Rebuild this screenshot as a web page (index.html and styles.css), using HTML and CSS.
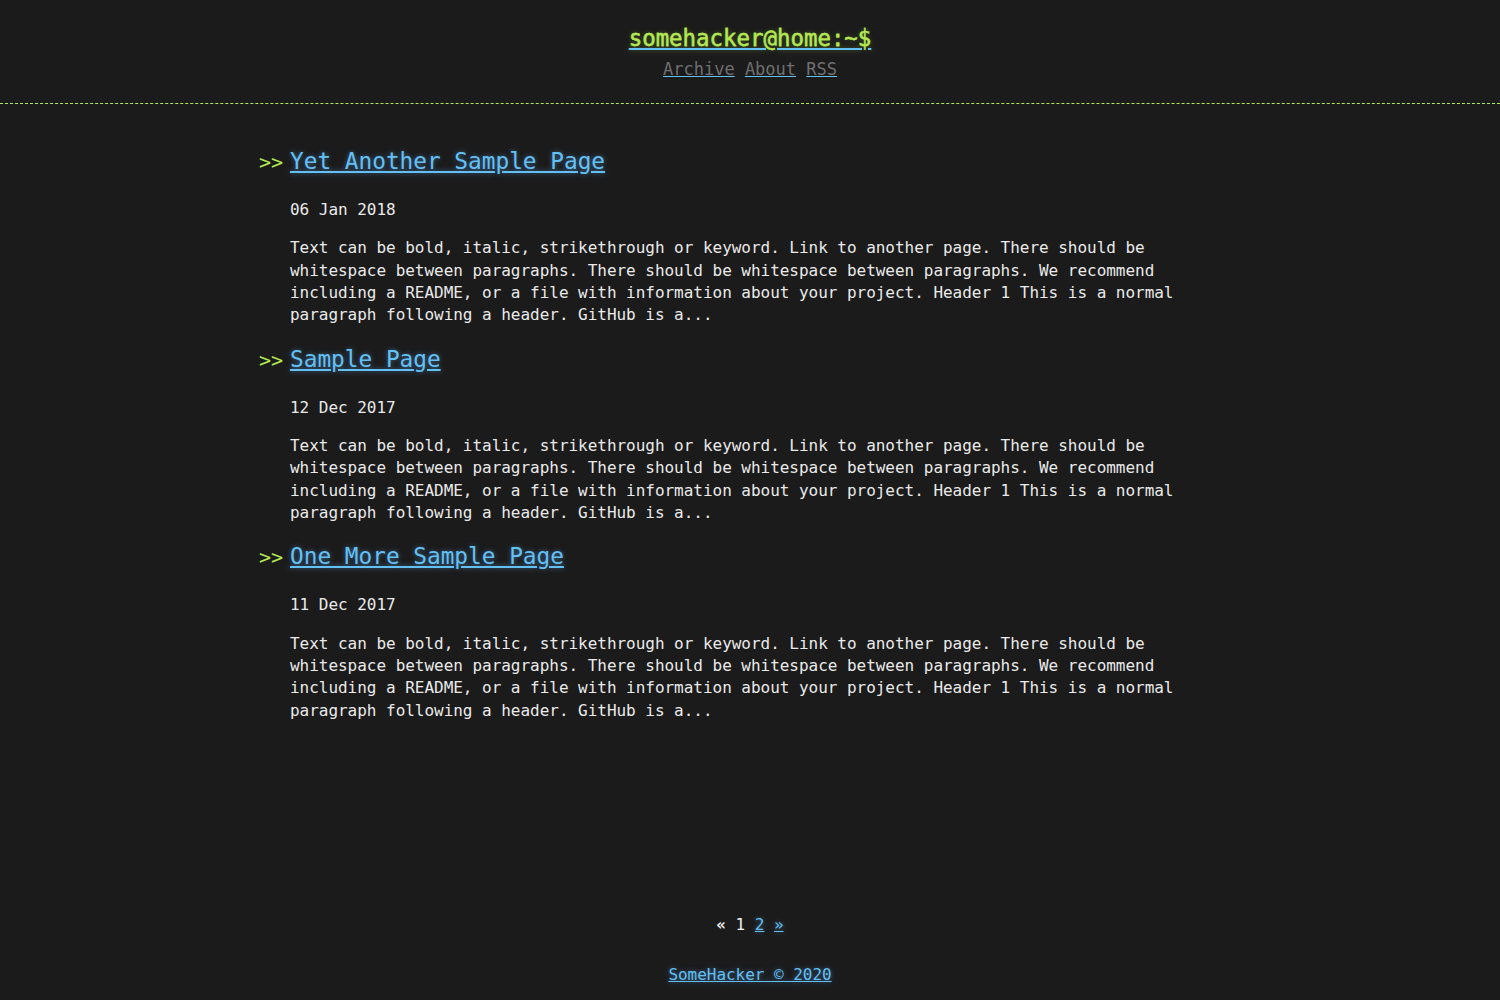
FILE: index.html
```html
<!DOCTYPE html>
<html lang="en">
<head>
<meta charset="utf-8">
<title>somehacker@home:~$</title>
<link rel="stylesheet" href="styles.css">
</head>
<body>
<header class="site-header">
  <h1 class="site-title"><a href="#">somehacker@home:~$</a></h1>
  <nav class="site-nav">
    <a href="#">Archive</a> <a href="#">About</a> <a href="#">RSS</a>
  </nav>
</header>

<main class="posts">
  <article class="post">
    <h2 class="post-title"><a href="#">Yet Another Sample Page</a></h2>
    <p class="post-date">06 Jan 2018</p>
    <p class="post-excerpt">Text can be bold, italic, strikethrough or keyword. Link to another page. There should be whitespace between paragraphs. There should be whitespace between paragraphs. We recommend including a README, or a file with information about your project. Header 1 This is a normal paragraph following a header. GitHub is a...</p>
  </article>
  <article class="post">
    <h2 class="post-title"><a href="#">Sample Page</a></h2>
    <p class="post-date">12 Dec 2017</p>
    <p class="post-excerpt">Text can be bold, italic, strikethrough or keyword. Link to another page. There should be whitespace between paragraphs. There should be whitespace between paragraphs. We recommend including a README, or a file with information about your project. Header 1 This is a normal paragraph following a header. GitHub is a...</p>
  </article>
  <article class="post">
    <h2 class="post-title"><a href="#">One More Sample Page</a></h2>
    <p class="post-date">11 Dec 2017</p>
    <p class="post-excerpt">Text can be bold, italic, strikethrough or keyword. Link to another page. There should be whitespace between paragraphs. There should be whitespace between paragraphs. We recommend including a README, or a file with information about your project. Header 1 This is a normal paragraph following a header. GitHub is a...</p>
  </article>
</main>

<nav class="pager">
  <span class="pager-item pager-prev">&laquo;</span> <span class="pager-item">1</span> <a class="pager-link" href="#">2</a> <a class="pager-link" href="#">&raquo;</a>
</nav>

<footer class="site-footer">
  <a href="#">SomeHacker &copy; 2020</a>
</footer>
</body>
</html>
```

FILE: styles.css
```css
html {
  background: #1b1b1b;
}

body {
  margin: 0;
  min-height: 100vh;
  display: flex;
  flex-direction: column;
  background: #1b1b1b;
  color: #eaeaea;
  font-family: "DejaVu Sans Mono", "Liberation Mono", monospace;
  font-size: 16px;
  line-height: 22.35px;
  letter-spacing: -0.03px;
}

a {
  color: #63c0f5;
  text-decoration: underline;
  text-decoration-color: #63c0f5;
  text-shadow: 0 0 5px rgba(104, 182, 255, 0.5);
}

.site-header {
  text-align: center;
  padding: 20px 0 22px;
  border-bottom: 1px dashed #b5e853;
}

.site-title {
  margin: 0;
  font-size: 22.4px;
  font-weight: normal;
  line-height: 36px;
  letter-spacing: 0;
}

.site-title a {
  color: #b5e853;
  -webkit-text-stroke: 0.3px #b5e853;
  text-shadow: 0 0 5px rgba(181, 232, 83, 0.35);
}

.site-nav {
  margin-top: 1px;
  font-size: 17px;
  line-height: 24px;
  letter-spacing: 0;
}

.site-nav a {
  color: #6f6f6f;
  text-shadow: none;
}

.posts {
  flex: 1;
  width: 920px;
  margin: 0 auto;
  padding-top: 41px;
}

.post {
  margin-bottom: 16px;
}

.post-title {
  margin: 0;
  font-size: 22.75px;
  font-weight: normal;
  line-height: 32px;
  letter-spacing: 0;
}

.post-title::before {
  content: ">>";
  display: inline-block;
  width: 24px;
  margin-left: -31px;
  margin-right: 7px;
  font-size: 20px;
  color: #b5e853;
}

.post-date {
  margin: 21px 0 0;
}

.post-excerpt {
  margin: 16px 0 0;
}

.pager {
  text-align: center;
  line-height: 24px;
  font-size: 16px;
}

.pager-item {
  color: #f0f0f0;
}

.pager-prev {
  font-weight: bold;
}

.site-footer {
  text-align: center;
  margin-top: 27px;
  padding-bottom: 14px;
  line-height: 22px;
}
```
